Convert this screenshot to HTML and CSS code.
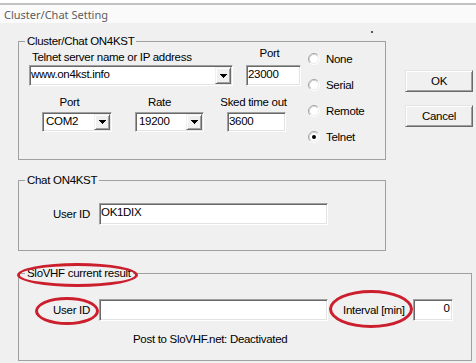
FILE: index.html
```html
<!DOCTYPE html>
<html>
<head>
<meta charset="utf-8">
<title>Cluster/Chat Setting</title>
<link rel="stylesheet" href="styles.css">
</head>
<body>
<div class="titlebar"><span class="title">Cluster/Chat Setting</span></div>
<span class="speck"></span>
<main class="content">
  <div class="top">
    <div class="groups">
      <section class="group g1">
        <span class="legend">Cluster/Chat ON4KST</span>
        <div class="g1-fields">
          <div class="row1">
            <div class="col-server">
              <div class="lbl">Telnet server name or IP address</div>
              <div class="combo combo-server"><span class="val">www.on4kst.info</span><span class="drop"><svg width="7" height="4" viewBox="0 0 7 4" shape-rendering="crispEdges"><path d="M0 0h7v1h-1v1h-1v1h-1v1h-1v-1h-1v-1h-1v-1h-1z" fill="#000"/></svg></span></div>
            </div>
            <div class="col-port">
              <div class="cap cap-port1">Port</div>
              <div class="edit edit-port">23000</div>
            </div>
          </div>
          <div class="row2">
            <div class="col-com">
              <div class="cap cap-port2">Port</div>
              <div class="combo combo-sm"><span class="val val-sm">COM2</span><span class="drop"><svg width="7" height="4" viewBox="0 0 7 4" shape-rendering="crispEdges"><path d="M0 0h7v1h-1v1h-1v1h-1v1h-1v-1h-1v-1h-1v-1h-1z" fill="#000"/></svg></span></div>
            </div>
            <div class="col-rate">
              <div class="cap cap-rate">Rate</div>
              <div class="combo combo-sm"><span class="val val-sm">19200</span><span class="drop"><svg width="7" height="4" viewBox="0 0 7 4" shape-rendering="crispEdges"><path d="M0 0h7v1h-1v1h-1v1h-1v1h-1v-1h-1v-1h-1v-1h-1z" fill="#000"/></svg></span></div>
            </div>
            <div class="col-sked">
              <div class="cap cap-sked">Sked time out</div>
              <div class="edit edit-sked">3600</div>
            </div>
          </div>
        </div>
        <div class="radios">
          <div class="radio"><svg class="rb" width="12" height="12" viewBox="0 0 12 12"><circle cx="6" cy="6" r="5" fill="#fff"/><path d="M2.11 9.89A5.5 5.5 0 0 1 9.89 2.11" fill="none" stroke="#a4a4a4"/><path d="M9.89 2.11A5.5 5.5 0 0 1 2.11 9.89" fill="none" stroke="#fff"/><path d="M2.82 9.18A4.5 4.5 0 0 1 9.18 2.82" fill="none" stroke="#cfcfcf"/><path d="M9.18 2.82A4.5 4.5 0 0 1 2.82 9.18" fill="none" stroke="#ececec"/></svg><span>None</span></div>
          <div class="radio"><svg class="rb" width="12" height="12" viewBox="0 0 12 12"><circle cx="6" cy="6" r="5" fill="#fff"/><path d="M2.11 9.89A5.5 5.5 0 0 1 9.89 2.11" fill="none" stroke="#a4a4a4"/><path d="M9.89 2.11A5.5 5.5 0 0 1 2.11 9.89" fill="none" stroke="#fff"/><path d="M2.82 9.18A4.5 4.5 0 0 1 9.18 2.82" fill="none" stroke="#cfcfcf"/><path d="M9.18 2.82A4.5 4.5 0 0 1 2.82 9.18" fill="none" stroke="#ececec"/></svg><span>Serial</span></div>
          <div class="radio"><svg class="rb" width="12" height="12" viewBox="0 0 12 12"><circle cx="6" cy="6" r="5" fill="#fff"/><path d="M2.11 9.89A5.5 5.5 0 0 1 9.89 2.11" fill="none" stroke="#a4a4a4"/><path d="M9.89 2.11A5.5 5.5 0 0 1 2.11 9.89" fill="none" stroke="#fff"/><path d="M2.82 9.18A4.5 4.5 0 0 1 9.18 2.82" fill="none" stroke="#cfcfcf"/><path d="M9.18 2.82A4.5 4.5 0 0 1 2.82 9.18" fill="none" stroke="#ececec"/></svg><span>Remote</span></div>
          <div class="radio"><svg class="rb" width="12" height="12" viewBox="0 0 12 12"><circle cx="6" cy="6" r="5" fill="#fff"/><path d="M2.11 9.89A5.5 5.5 0 0 1 9.89 2.11" fill="none" stroke="#a4a4a4"/><path d="M9.89 2.11A5.5 5.5 0 0 1 2.11 9.89" fill="none" stroke="#fff"/><path d="M2.82 9.18A4.5 4.5 0 0 1 9.18 2.82" fill="none" stroke="#cfcfcf"/><path d="M9.18 2.82A4.5 4.5 0 0 1 2.82 9.18" fill="none" stroke="#ececec"/><circle cx="6" cy="6" r="2" fill="#000"/></svg><span>Telnet</span></div>
        </div>
      </section>
      <section class="group g2">
        <span class="legend">Chat ON4KST</span>
        <div class="urow">
          <span class="ulbl">User ID</span>
          <div class="edit edit-user">OK1DIX</div>
        </div>
      </section>
    </div>
    <div class="buttons">
      <button class="btn">OK</button>
      <button class="btn">Cancel</button>
    </div>
  </div>
  <section class="group g3">
    <span class="legend">SloVHF current result</span>
    <div class="urow">
      <span class="ulbl">User ID</span>
      <div class="edit edit-user"></div>
      <span class="ilbl">Interval [min]</span>
      <div class="edit edit-int">0</div>
    </div>
    <div class="post">Post to SloVHF.net: Deactivated</div>
    <span class="ring ring-legend"></span>
    <span class="ring ring-user"></span>
    <span class="ring ring-int"></span>
  </section>
</main>
</body>
</html>
```

FILE: styles.css
```css
body {
  margin: 0;
  width: 476px;
  height: 363px;
  overflow: hidden;
  position: relative;
  background: #f0f0f0;
  color: #000;
  font-family: "Liberation Sans", Arial, sans-serif;
  font-size: 11.5px;
  letter-spacing: -0.3px;
}

.titlebar {
  height: 23px;
  box-sizing: border-box;
  padding: 7px 0 0 4px;
  background: linear-gradient(#ffffff 0 3px, #c2c2c2 3px 5px, #fafafa 5px);
}

.title {
  display: block;
  font-family: "Noto Sans", "Open Sans", sans-serif;
  font-size: 11px;
  letter-spacing: 0;
  line-height: 15px;
  color: #5c5c5c;
}

.speck {
  position: absolute;
  left: 371px;
  top: 31px;
  width: 2px;
  height: 2px;
  background: #555;
}

.content {
  padding: 18px 0 0 18px;
}

.top {
  display: flex;
  align-items: flex-start;
}

.groups {
  width: 368px;
}

.group {
  position: relative;
  box-sizing: border-box;
  border: 1px solid #a0a0a0;
}

.legend {
  position: absolute;
  left: 6px;
  top: -8px;
  padding: 0 2px;
  background: #f0f0f0;
  line-height: 15px;
  white-space: nowrap;
}

.g1 {
  height: 119px;
  display: flex;
  align-items: flex-start;
  padding: 4px 0 0 10px;
}

.g1-fields {
  width: 272px;
}

.row1 {
  display: flex;
  align-items: flex-end;
}

.col-server {
  width: 204px;
}

.col-port {
  width: 55px;
  margin-left: 13px;
}

.lbl {
  line-height: 15px;
  padding-left: 3px;
  white-space: nowrap;
}

.cap {
  line-height: 15px;
  text-align: center;
  white-space: nowrap;
}

.cap-port1 { margin: 0 -12px 4px -20px; }
.cap-port2 { margin: 0 -5px 2px -20px; }
.cap-rate  { margin: 0 0 2px -20px; }
.cap-sked  { margin: 0 -14px 2px -20px; }

.row2 {
  display: flex;
  margin-top: 9px;
}

.col-com  { width: 70px; margin-left: 13px; }
.col-rate { width: 69px; margin-left: 23px; }
.col-sked { width: 59px; margin-left: 23px; }

.edit,
.combo {
  box-sizing: border-box;
  background: #fff;
  border: 1px solid;
  border-color: #a0a0a0 #ffffff #ffffff #a0a0a0;
  box-shadow: inset 1px 1px #696969, inset -1px -1px #e3e3e3;
  line-height: 14px;
  padding: 1px 1px 1px 1px;
  white-space: nowrap;
  overflow: hidden;
}

.combo {
  display: flex;
  justify-content: space-between;
  align-items: stretch;
}

.val-sm {
  padding-left: 2px;
}

.combo-server {
  height: 21px;
}

.combo-sm {
  height: 20px;
}

.edit-port {
  height: 21px;
}

.edit-sked {
  height: 20px;
}

.drop {
  width: 16px;
  flex: none;
  box-sizing: border-box;
  background: #f0f0f0;
  border: 1px solid;
  border-color: #f0f0f0 #696969 #696969 #f0f0f0;
  box-shadow: inset 1px 1px #ffffff, inset -1px -1px #a0a0a0;
  display: flex;
  align-items: center;
  justify-content: center;
}

.drop svg {
  display: block;
}

.radios {
  margin-left: 7px;
}

.radio {
  display: flex;
  align-items: center;
  gap: 6px;
  height: 26px;
}

.rb {
  display: block;
  flex: none;
}

.g2 {
  height: 71px;
  margin-top: 20px;
  padding-top: 22px;
}

.urow {
  display: flex;
  align-items: center;
}

.ulbl {
  width: 71px;
  text-align: right;
  margin-right: 9px;
  line-height: 15px;
}

.edit-user {
  width: 229px;
  height: 22px;
}

.buttons {
  display: flex;
  flex-direction: column;
  gap: 13px;
  margin: 29px 0 0 19px;
}

.btn {
  width: 68px;
  height: 22px;
  box-sizing: border-box;
  padding: 0;
  font: inherit;
  letter-spacing: inherit;
  color: #000;
  background: #f0f0f0;
  border: 1px solid;
  border-color: #e3e3e3 #696969 #696969 #e3e3e3;
  box-shadow: inset 1px 1px #ffffff, inset -1px -1px #a0a0a0;
  line-height: 18px;
}

.g3 {
  width: 454px;
  height: 88px;
  margin-top: 22px;
  padding-top: 25px;
}

.ilbl {
  margin: 0 8px 0 15px;
  line-height: 15px;
  white-space: nowrap;
}

.edit-int {
  width: 40px;
  height: 22px;
  text-align: right;
  padding-right: 2px;
}

.post {
  margin-top: 11px;
  padding-left: 114px;
  line-height: 15px;
  white-space: nowrap;
}

.ring {
  position: absolute;
  box-sizing: border-box;
  border: 3px solid #cc1f2e;
  border-radius: 50%;
}

.ring-legend {
  left: -2px;
  top: -11px;
  width: 121px;
  height: 24px;
}

.ring-user {
  left: 16px;
  top: 23px;
  width: 64px;
  height: 28px;
}

.ring-int {
  left: 310px;
  top: 16px;
  width: 84px;
  height: 38px;
}
```
